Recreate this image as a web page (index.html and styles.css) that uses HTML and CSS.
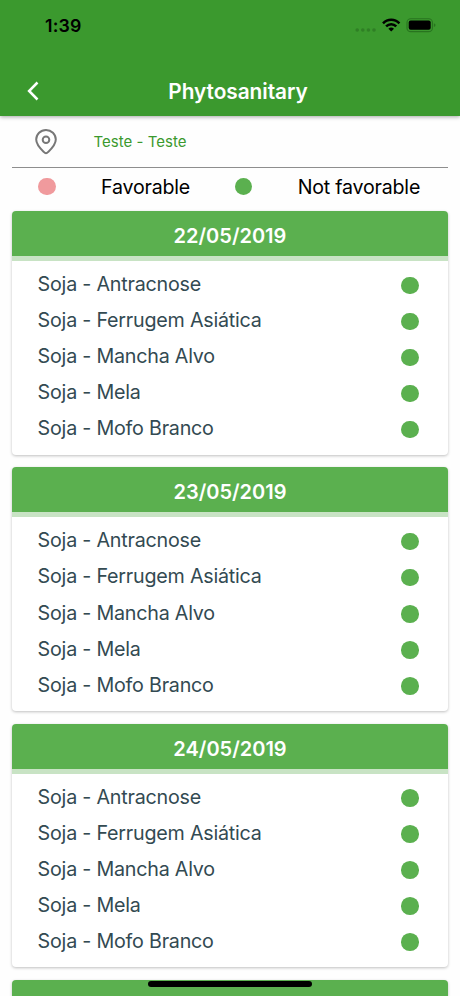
FILE: index.html
```html
<!DOCTYPE html>
<html lang="en">
<head>
<meta charset="utf-8">
<title>Phytosanitary</title>
<link rel="stylesheet" href="styles.css">
</head>
<body>
<header class="header">
  <div class="status">
    <span class="time">1:39</span>
    <svg class="status-icons" width="84" height="18" viewBox="0 0 84 18">
      <g fill="#2f7f25"><circle cx="2.2" cy="13" r="1.8"/><circle cx="7.8" cy="13" r="1.8"/><circle cx="13.4" cy="13" r="1.8"/><circle cx="19" cy="13" r="1.8"/></g>
      <g fill="none" stroke="#000" stroke-width="2.5"><path d="M28 6.3C32.6 1.5 39.8 1.5 44.4 6.3"/><path d="M31.1 9.4C34 6.4 38.4 6.4 41.3 9.4"/></g>
      <path d="M33.4 11.7C35.2 10.2 37.2 10.2 39 11.7L36.2 14.6Z"/>
      <rect x="52" y="1.8" width="25.4" height="12.8" rx="3.7" fill="none" stroke="#28741f" stroke-width="1.1"/>
      <rect x="53.7" y="3.6" width="22" height="9.2" rx="2"/>
      <path d="M78.9 6.2Q80.5 6.8 80.5 8.1T78.9 10Z" fill="#28741f"/>
    </svg>
  </div>
  <div class="titlebar">
    <svg class="back" width="14" height="20" viewBox="0 0 14 20"><path d="M11.5 1.5L3.1 10L11.5 18.5" fill="none" stroke="#fff" stroke-width="2.5"/></svg>
    <h1 class="title">Phytosanitary</h1>
  </div>
</header>
<main class="content">
  <div class="location">
    <svg class="pin" width="22" height="26" viewBox="0 0 22 26" fill="none" stroke="#777" stroke-width="2"><path d="M11 24.2Q10 24.2 8.8 22.9C5 19.4 1.2 15.3 1.2 10.6A9.8 9.6 0 0 1 20.8 10.6C20.8 15.3 17 19.4 13.2 22.9Q12 24.2 11 24.2Z"/><circle cx="11" cy="10.8" r="3.3"/></svg>
    <span class="place">Teste - Teste</span>
  </div>
  <div class="legend">
    <i class="dot dot-red"></i><span class="label favorable">Favorable</span>
    <i class="dot"></i><span class="label unfavorable">Not favorable</span>
  </div>
  <section class="card">
    <h2 class="date">22/05/2019</h2>
    <ul class="list">
      <li><span>Soja - Antracnose</span><i class="dot"></i></li>
      <li><span>Soja - Ferrugem Asiática</span><i class="dot"></i></li>
      <li><span>Soja - Mancha Alvo</span><i class="dot"></i></li>
      <li><span>Soja - Mela</span><i class="dot"></i></li>
      <li><span>Soja - Mofo Branco</span><i class="dot"></i></li>
    </ul>
  </section>
  <section class="card">
    <h2 class="date">23/05/2019</h2>
    <ul class="list">
      <li><span>Soja - Antracnose</span><i class="dot"></i></li>
      <li><span>Soja - Ferrugem Asiática</span><i class="dot"></i></li>
      <li><span>Soja - Mancha Alvo</span><i class="dot"></i></li>
      <li><span>Soja - Mela</span><i class="dot"></i></li>
      <li><span>Soja - Mofo Branco</span><i class="dot"></i></li>
    </ul>
  </section>
  <section class="card">
    <h2 class="date">24/05/2019</h2>
    <ul class="list">
      <li><span>Soja - Antracnose</span><i class="dot"></i></li>
      <li><span>Soja - Ferrugem Asiática</span><i class="dot"></i></li>
      <li><span>Soja - Mancha Alvo</span><i class="dot"></i></li>
      <li><span>Soja - Mela</span><i class="dot"></i></li>
      <li><span>Soja - Mofo Branco</span><i class="dot"></i></li>
    </ul>
  </section>
  <section class="card card-next"></section>
</main>
<div class="home-indicator"></div>
</body>
</html>
```
FILE: styles.css
```css
* { box-sizing: border-box; }
body {
  margin: 0;
  width: 460px;
  height: 996px;
  overflow: hidden;
  background: #fefefe;
  color: #000;
  font-family: Inter, "Liberation Sans", sans-serif;
}
.header {
  position: relative;
  height: 116px;
  background: #3b992e;
  box-shadow: 0 1px 4px rgba(0, 0, 0, .35);
}
.status {
  height: 66px;
  padding: 17px 21px 0 45px;
  display: flex;
  justify-content: space-between;
  align-items: flex-start;
}
.time { font-size: 17.8px; line-height: 18px; font-weight: 600; letter-spacing: .15px; }
.status-icons { display: block; }
.titlebar {
  height: 50px;
  display: grid;
  grid-template-columns: 60px 1fr 44px;
  align-items: center;
}
.back { margin-left: 26px; }
.title {
  margin: 0;
  padding-top: 1px;
  text-align: center;
  color: #fff;
  font-size: 20.8px;
  line-height: 26px;
  font-weight: 600;
  letter-spacing: -.05px;
}
.content { padding: 0 12px; }
.location {
  height: 52px;
  border-bottom: 1px solid #8e8e8e;
  display: flex;
  align-items: center;
}
.pin { margin-left: 23px; margin-right: 36.5px; }
.place { color: #3b992e; font-size: 15px; letter-spacing: .02px; }
.legend {
  height: 43px;
  padding: 0 0 6px 26px;
  display: flex;
  align-items: center;
}
.dot { flex: none; width: 17.6px; height: 17.6px; border-radius: 50%; background: #5bb04f; }
.dot-red { background: #f09a9d; }
.label { font-size: 19.6px; line-height: 24px; white-space: nowrap; letter-spacing: -.2px; }
.favorable { width: 134px; padding-left: 45.5px; margin-right: 45px; }
.unfavorable { padding-left: 45.5px; }
.card {
  height: 243.9px;
  margin-bottom: 12.4px;
  border-radius: 4px;
  background: #fff;
  box-shadow: 0 1px 3px rgba(0, 0, 0, .25);
}
.date {
  height: 50px;
  margin: 0;
  border-radius: 4px 4px 0 0;
  border-bottom: 5.5px solid #c8e3c4;
  background: #5bb04f;
  color: #fff;
  text-align: center;
  font-size: 20px;
  line-height: 51px;
  font-weight: 600;
}
.list { margin: 0; padding: 5.3px 29.5px 0 25.6px; list-style: none; }
.list li {
  height: 36.07px;
  display: flex;
  align-items: center;
  justify-content: space-between;
  color: #334a52;
  font-size: 19.7px;
  line-height: 30px;
  letter-spacing: -.22px;
}
.list span { padding-bottom: .4px; }
.list .dot { margin-top: 2px; }
.card-next {
  height: 16px;
  margin-bottom: 0;
  border-radius: 4px 4px 0 0;
  background: #5bb04f;
}
.home-indicator {
  position: absolute;
  left: 148px;
  top: 981px;
  width: 164px;
  height: 6px;
  border-radius: 3px;
  background: #000;
}
```
